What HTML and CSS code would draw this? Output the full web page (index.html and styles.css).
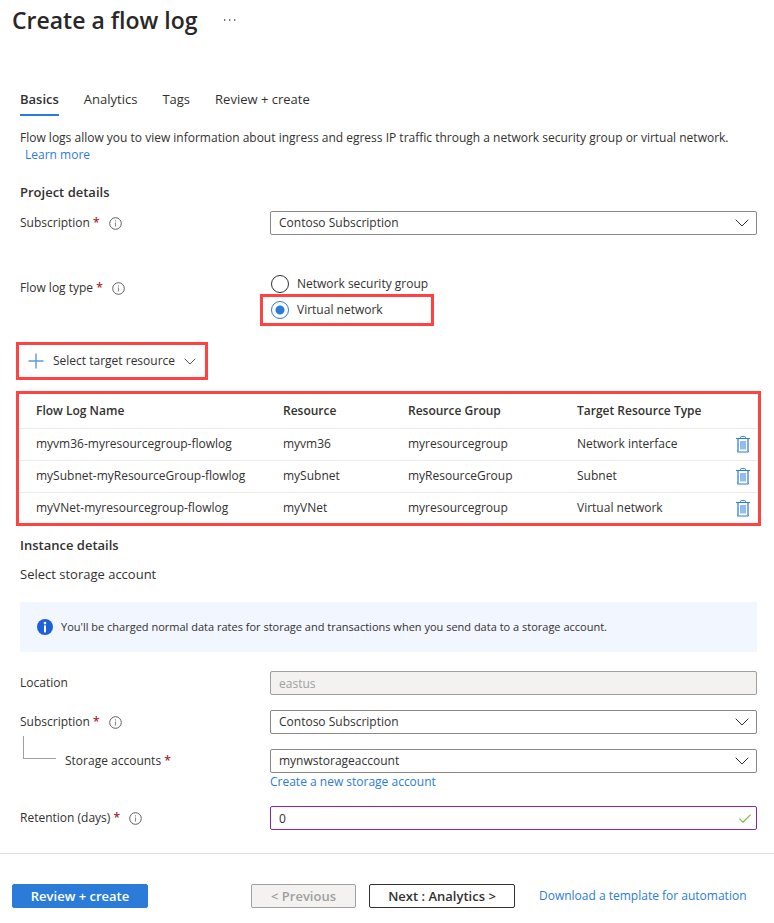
FILE: index.html
```html
<!DOCTYPE html>
<html lang="en">
<head>
  <meta charset="UTF-8" />
  <title>Create a flow log</title>
  <meta name="viewport" content="width=device-width, initial-scale=1.0" />
  <link rel="stylesheet" href="styles.css">
</head>
<body>
  <!-- Shared icons -->
  <svg class="sprite" aria-hidden="true">
    <symbol id="icon-info" viewBox="0 0 13 13">
      <circle cx="6.5" cy="6.5" r="5.8" fill="none" stroke="#605e5c" stroke-width="1" />
      <path d="M6.5 5.4v4.2M6.5 3.2v1.3" fill="none" stroke="#8a8886" stroke-width="1.1" />
    </symbol>
    <symbol id="icon-chevron" viewBox="0 0 14 8">
      <path d="M0.7 0.7L7 7L13.3 0.7" fill="none" stroke="currentColor" stroke-width="1" />
    </symbol>
    <symbol id="icon-trash" viewBox="0 0 14 17">
      <path d="M4.5 2.2V1.4Q4.5 0.6 5.3 0.6H8.7Q9.5 0.6 9.5 1.4V2.2" fill="none" stroke="#2b7cd8" />
      <path d="M0 2.5H14" stroke="#2b7cd8" />
      <path d="M2 3V15.5M12 3V15.5" stroke="#79ace9" stroke-width="2" />
      <path d="M1.5 15.2V16H12.5V15.2" fill="none" stroke="#2b7cd8" />
      <rect x="4" y="5" width="6" height="8.5" fill="#94bdee" />
    </symbol>
  </svg>

  <header class="page-header">
    <h1>Create a flow log</h1>
    <button class="more-btn" type="button" aria-label="More">
      <svg width="12" height="2" viewBox="0 0 12 2"><path d="M0 1H1.3M5 1H6.3M10 1H11.3" stroke="#484644" stroke-width="1.3" /></svg>
    </button>
  </header>

  <main>
    <nav class="tabs">
      <a class="active" href="#basics">Basics</a>
      <a href="#analytics">Analytics</a>
      <a href="#tags">Tags</a>
      <a href="#review">Review + create</a>
    </nav>

    <p class="description">Flow logs allow you to view information about ingress and egress IP traffic through a network security group or virtual network. <a href="#learn">Learn more</a></p>

    <h2 class="project-title">Project details</h2>

    <div class="field">
      <div class="field-label">
        <label for="subscription">Subscription <span class="required">*</span></label>
        <svg class="info"><use href="#icon-info" /></svg>
      </div>
      <div class="dropdown">
        <select id="subscription"><option>Contoso Subscription</option></select>
        <svg class="chevron"><use href="#icon-chevron" /></svg>
      </div>
    </div>

    <div class="field type-field" role="radiogroup" aria-labelledby="typeLabel">
      <div class="field-label">
        <span id="typeLabel">Flow log type <span class="required">*</span></span>
        <svg class="info"><use href="#icon-info" /></svg>
      </div>
      <div class="radios">
        <label><input type="radio" name="logType" value="nsg">Network security group</label>
        <label class="outlined"><input type="radio" name="logType" value="vnet" checked>Virtual network</label>
      </div>
    </div>

    <button class="target-btn outlined" type="button">
      <svg width="16" height="16" viewBox="0 0 16 16"><path d="M8 0.5V15.5M0.5 8H15.5" stroke="#5c9ae2" stroke-width="1.4" /></svg>
      Select target resource
      <svg class="chevron-small"><use href="#icon-chevron" /></svg>
    </button>

    <div class="table-wrap">
      <table>
        <thead>
          <tr>
            <th class="col-name">Flow Log Name</th>
            <th class="col-resource">Resource</th>
            <th class="col-group">Resource Group</th>
            <th>Target Resource Type</th>
            <th class="col-action"></th>
          </tr>
        </thead>
        <tbody>
          <tr>
            <td>myvm36-myresourcegroup-flowlog</td>
            <td>myvm36</td>
            <td>myresourcegroup</td>
            <td>Network interface</td>
            <td><button type="button" aria-label="Delete"><svg class="trash"><use href="#icon-trash" /></svg></button></td>
          </tr>
          <tr>
            <td>mySubnet-myResourceGroup-flowlog</td>
            <td>mySubnet</td>
            <td>myResourceGroup</td>
            <td>Subnet</td>
            <td><button type="button" aria-label="Delete"><svg class="trash"><use href="#icon-trash" /></svg></button></td>
          </tr>
          <tr>
            <td>myVNet-myresourcegroup-flowlog</td>
            <td>myVNet</td>
            <td>myresourcegroup</td>
            <td>Virtual network</td>
            <td><button type="button" aria-label="Delete"><svg class="trash"><use href="#icon-trash" /></svg></button></td>
          </tr>
        </tbody>
      </table>
    </div>

    <h2 class="instance-title">Instance details</h2>
    <p class="hint">Select storage account</p>

    <div class="banner">
      <svg width="16" height="16" viewBox="0 0 16 16">
        <circle cx="8" cy="8" r="8" fill="#1f5fd8" />
        <circle cx="8" cy="4.1" r="1.3" fill="#fff" />
        <rect x="7" y="6.4" width="2" height="7" fill="#fff" />
      </svg>
      <span>You'll be charged normal data rates for storage and transactions when you send data to a storage account.</span>
    </div>

    <div class="form-rows">
      <div class="field">
        <div class="field-label"><label for="location">Location</label></div>
        <input id="location" type="text" value="eastus" disabled>
      </div>

      <div class="field">
        <div class="field-label">
          <label for="storageSubscription">Subscription <span class="required">*</span></label>
          <svg class="info"><use href="#icon-info" /></svg>
        </div>
        <div class="dropdown">
          <select id="storageSubscription"><option>Contoso Subscription</option></select>
          <svg class="chevron"><use href="#icon-chevron" /></svg>
        </div>
      </div>

      <div class="field">
        <div class="field-label">
          <span class="branch"></span>
          <label for="storageAccount">Storage accounts <span class="required">*</span></label>
        </div>
        <div>
          <div class="dropdown">
            <select id="storageAccount"><option>mynwstorageaccount</option></select>
            <svg class="chevron"><use href="#icon-chevron" /></svg>
          </div>
          <a class="create-link" href="#new-account">Create a new storage account</a>
        </div>
      </div>

      <div class="field">
        <div class="field-label">
          <label for="retention">Retention (days) <span class="required">*</span></label>
          <svg class="info"><use href="#icon-info" /></svg>
        </div>
        <div class="dropdown">
          <input id="retention" class="edited" type="text" value="0">
          <svg class="check" viewBox="0 0 12 9"><path d="M0.4 4.6L4 8.2L11.6 0.6" fill="none" stroke="#7fba42" stroke-width="1.2" /></svg>
        </div>
      </div>
    </div>
  </main>

  <footer>
    <button class="btn primary" type="button">Review + create</button>
    <button class="btn previous" type="button" disabled>&lt; Previous</button>
    <button class="btn next" type="button">Next : Analytics &gt;</button>
    <a href="#template">Download a template for automation</a>
  </footer>
</body>
</html>
```

FILE: styles.css
```css
* {
  box-sizing: border-box;
  margin: 0;
  padding: 0;
}

body {
  font-family: "Segoe UI", "Open Sans", "Noto Sans", sans-serif;
  font-size: 12px;
  line-height: 20px;
  color: #323130;
  background: #fff;
}

button,
input,
select {
  font: inherit;
  color: inherit;
}

button {
  border: none;
  background: none;
  cursor: pointer;
}

a {
  color: #2b7cd8;
  text-decoration: none;
  white-space: nowrap;
}

svg {
  display: block;
  flex-shrink: 0;
}

.sprite {
  display: none;
}

/* Header */
.page-header {
  display: flex;
  align-items: center;
  gap: 27px;
  padding: 4px 12px 0;
}

h1 {
  font-size: 23px;
  line-height: 32px;
  font-weight: 600;
  color: #292827;
}

main {
  padding: 46px 17px 0 20px;
}

.tabs {
  display: flex;
  gap: 25px;
  font-size: 13px;
}

.tabs a {
  padding: 7px 0 5px;
  border-bottom: 2px solid transparent;
  color: inherit;
}

.tabs .active {
  font-weight: 600;
  border-bottom-color: #2b7cd8;
}

.description {
  margin-top: 13px;
  line-height: 17px;
}

.description a {
  padding-left: 5px;
}

h2 {
  font-size: 13px;
  font-weight: 600;
}

.project-title {
  margin: 19px 0 9px;
}

/* Form fields */
.field {
  display: grid;
  grid-template-columns: 250px 1fr;
  align-items: start;
}

.field-label {
  display: flex;
  align-items: center;
  gap: 9px;
  height: 24px;
}

.required {
  color: #a4262c;
  font-weight: 600;
}

.info {
  width: 13px;
  height: 13px;
}

/* Icon shares one grid cell with its control */
.dropdown {
  display: grid;
  align-items: center;
}

.dropdown > * {
  grid-area: 1 / 1;
}

.dropdown svg {
  justify-self: end;
  pointer-events: none;
}

select,
input[type="text"] {
  appearance: none;
  width: 100%;
  height: 24px;
  padding: 0 8px;
  border: 1px solid #8a8886;
  border-radius: 2px;
  background: #fff;
}

input[type="text"]:disabled {
  background: #f3f2f1;
  border-color: #a19f9d;
  color: #a19f9d;
}

input.edited {
  border-color: #8427a8;
}

.chevron {
  width: 14px;
  height: 8px;
  margin-right: 8px;
}

.check {
  width: 12px;
  height: 9px;
  margin-right: 6px;
}

.type-field {
  margin-top: 36px;
}

.type-field .field-label {
  margin-top: 5px;
}

.radios {
  display: flex;
  flex-direction: column;
  align-items: start;
  margin-left: -7px;
}

.radios label {
  display: flex;
  align-items: center;
  gap: 8px;
  min-width: 168px;
  height: 26px;
  padding-left: 8px;
}

input[type="radio"] {
  appearance: none;
  width: 18px;
  height: 18px;
  border: 1px solid #323130;
  border-radius: 50%;
}

input[type="radio"]:checked {
  border-color: #2b7cd8;
  background: radial-gradient(circle, #2b7cd8 4px, transparent 5px);
}

.outlined {
  outline: 3px solid #ff4343;
}

.target-btn {
  display: flex;
  align-items: center;
  gap: 9px;
  height: 32px;
  margin: 22px 0 18px -1px;
  padding: 0 9px;
}

.chevron-small {
  width: 12px;
  height: 7px;
}

/* Target resources */
.table-wrap {
  position: relative;
}

.table-wrap::after {
  content: "";
  position: absolute;
  inset: -4px -4px -1px;
  border: 3px solid #ff4343;
  pointer-events: none;
}

table {
  width: 100%;
  table-layout: fixed;
  border-collapse: separate;
  border-spacing: 0;
}

th,
td {
  height: 32px;
  padding: 0 0 2px 16px;
  text-align: left;
  white-space: nowrap;
  border-bottom: 1px solid #edebe9;
}

th {
  height: 34px;
  font-weight: 600;
}

.col-name {
  width: 247px;
}

.col-resource {
  width: 125px;
}

.col-group {
  width: 169px;
}

.col-action {
  width: 37px;
}

tbody tr:last-child td {
  border-bottom-color: transparent;
}

td:last-child {
  padding-bottom: 0;
}

.trash {
  width: 14px;
  height: 17px;
}

td button {
  display: block;
}

/* Instance details */
.instance-title {
  margin-top: 10px;
}

.hint {
  margin: 9px 0 18px;
  font-size: 13px;
}

.banner {
  display: flex;
  align-items: center;
  gap: 8px;
  min-height: 50px;
  padding: 0 17px;
  background: #f2f6ff;
  font-size: 11px;
}

.form-rows {
  display: grid;
  gap: 15px;
  margin-top: 19px;
}

/* Line from the subscription row down to its storage account */
.branch {
  align-self: flex-start;
  width: 33px;
  height: 23px;
  margin: -13px 0 0 3px;
  border: solid #a19f9d;
  border-width: 0 0 1px 1px;
}

.create-link {
  display: block;
  line-height: 18px;
}

/* Footer */
footer {
  display: flex;
  align-items: center;
  margin-top: 23px;
  padding: 30px 12px 15px;
  border-top: 1px solid #e1dfdd;
}

.btn {
  flex-shrink: 0;
  height: 24px;
  border: 1px solid #323130;
  border-radius: 2px;
  font-size: 13px;
  font-weight: 600;
  line-height: 20px;
}

.primary {
  width: 136px;
  margin-right: 103px;
  border-color: #2b7cd8;
  background: #2b7cd8;
  color: #fff;
}

.previous {
  width: 105px;
  margin-right: 13px;
  border-color: #a19f9d;
  background: #f3f2f1;
  color: #a19f9d;
}

.next {
  width: 146px;
  margin-right: 24px;
}
```
